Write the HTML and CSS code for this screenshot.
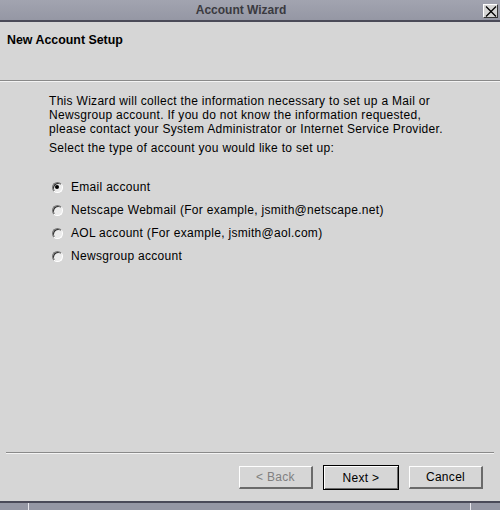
FILE: index.html
```html
<!DOCTYPE html>
<html>
<head>
<meta charset="utf-8">
<title>Account Wizard</title>
<link rel="stylesheet" href="styles.css">
</head>
<body>
<div class="window">
  <div class="titlebar">
    <span class="title">Account Wizard</span>
    <span class="close">
      <svg width="12" height="11" viewBox="0 0 12 11"><path d="M1 0.5 L11 10.5 M11 0.5 L1 10.5" stroke="#000" stroke-width="1.3" fill="none"/></svg>
    </span>
  </div>
  <div class="header">
    <h1 class="heading">New Account Setup</h1>
  </div>
  <div class="content">
    <p class="intro">This Wizard will collect the information necessary to set up a Mail or<br>Newsgroup account. If you do not know the information requested,<br>please contact your System Administrator or Internet Service Provider.</p>
    <p class="prompt">Select the type of account you would like to set up:</p>
    <div class="options">
      <label class="option"><span class="radio checked"></span>Email account</label>
      <label class="option"><span class="radio"></span>Netscape Webmail (For example, jsmith@netscape.net)</label>
      <label class="option"><span class="radio"></span>AOL account (For example, jsmith@aol.com)</label>
      <label class="option"><span class="radio"></span>Newsgroup account</label>
    </div>
  </div>
  <div class="footer">
    <div class="sep"></div>
    <div class="buttons">
      <button class="btn disabled">&lt; Back</button>
      <button class="btn default">Next &gt;</button>
      <button class="btn">Cancel</button>
    </div>
  </div>
  <div class="statusbar">
    <span class="cell first"></span>
    <span class="cell mid"></span>
    <span class="cell last"></span>
  </div>
</div>
</body>
</html>
```
FILE: styles.css
```css
html, body {
  margin: 0;
  padding: 0;
  background: #d6d6d6;
}
.window {
  width: 500px;
  height: 510px;
  display: flex;
  flex-direction: column;
  font-family: "Liberation Sans", Arial, sans-serif;
  font-size: 12px;
  letter-spacing: 0.3px;
  color: #000;
  overflow: hidden;
}
.titlebar {
  height: 20px;
  flex: none;
  background: linear-gradient(#a2a4b0, #9597a4);
  border-bottom: 2px solid #4a4a58;
  display: flex;
  align-items: center;
  justify-content: center;
  position: relative;
}
.title {
  font-weight: bold;
  font-size: 12px;
  letter-spacing: 0;
  color: #3a3a40;
  margin-left: -18px;
}
.close {
  position: absolute;
  right: 2px;
  top: 4px;
  width: 15px;
  height: 14px;
  box-sizing: border-box;
  background: #d6d6d6;
  border-top: 1px solid #fff;
  border-left: 1px solid #fff;
  border-right: 1px solid #333;
  border-bottom: 1px solid #333;
  display: flex;
  align-items: center;
  justify-content: center;
}
.close svg { display: block; }
.header {
  height: 58px;
  flex: none;
  border-bottom: 1px solid #8a8a8a;
  box-shadow: 0 1px 0 #f4f4f4;
  padding-left: 7px;
  display: flex;
  align-items: flex-start;
}
.heading {
  margin: 11px 0 0;
  font-size: 12.4px;
  letter-spacing: 0;
  font-weight: bold;
}
.content {
  flex: 1;
  padding: 13px 0 0 49px;
}
.intro {
  margin: 0;
  line-height: 14px;
}
.prompt {
  margin: 5px 0 0;
  line-height: 14px;
}
.options {
  margin-top: 25px;
  display: flex;
  flex-direction: column;
  gap: 9px;
}
.option {
  display: flex;
  align-items: center;
  height: 14px;
  padding-left: 3px;
}
.radio {
  width: 11px;
  height: 11px;
  box-sizing: border-box;
  border-radius: 50%;
  border: 1px solid;
  border-color: #777 #fff #fff #777;
  background: #ececec;
  margin-right: 8px;
  position: relative;
  box-shadow: inset 1px 1px 0 #333;
}
.radio.checked::after {
  content: "";
  position: absolute;
  left: 2px;
  top: 2px;
  width: 4px;
  height: 4px;
  border-radius: 50%;
  background: #000;
}
.footer {
  flex: none;
  padding: 0 6px;
}
.sep {
  height: 0;
  border-top: 1px solid #8a8a8a;
  border-bottom: 1px solid #f4f4f4;
}
.buttons {
  display: flex;
  justify-content: flex-end;
  align-items: flex-start;
  gap: 10px;
  padding: 12px 11px 12px 0;
}
.btn {
  width: 74px;
  height: 23px;
  box-sizing: border-box;
  font-family: "Liberation Sans", Arial, sans-serif;
  font-size: 12px;
  letter-spacing: 0.3px;
  color: #000;
  background: #d6d6d6;
  border-top: 1px solid #fff;
  border-left: 1px solid #fff;
  border-right: 2px solid #6a6a6a;
  border-bottom: 2px solid #6a6a6a;
  padding: 0;
  margin: 0;
}
.btn.disabled { color: #808080; }
.btn.default {
  width: 76px;
  height: 25px;
  margin-top: -1px;
  margin-bottom: -1px;
  border: 1px solid #000;
  box-shadow: inset 1px 1px 0 #fff, inset -1px -1px 0 #6a6a6a;
}
.statusbar {
  flex: none;
  height: 7px;
  border-top: 2px solid #4a4a58;
  background: #9597a4;
  display: flex;
}
.cell { height: 100%; }
.cell.first { width: 28px; border-right: 1px solid #e8e8ee; }
.cell.mid { flex: 1; border-right: 1px solid #e8e8ee; }
.cell.last { width: 29px; }
```
